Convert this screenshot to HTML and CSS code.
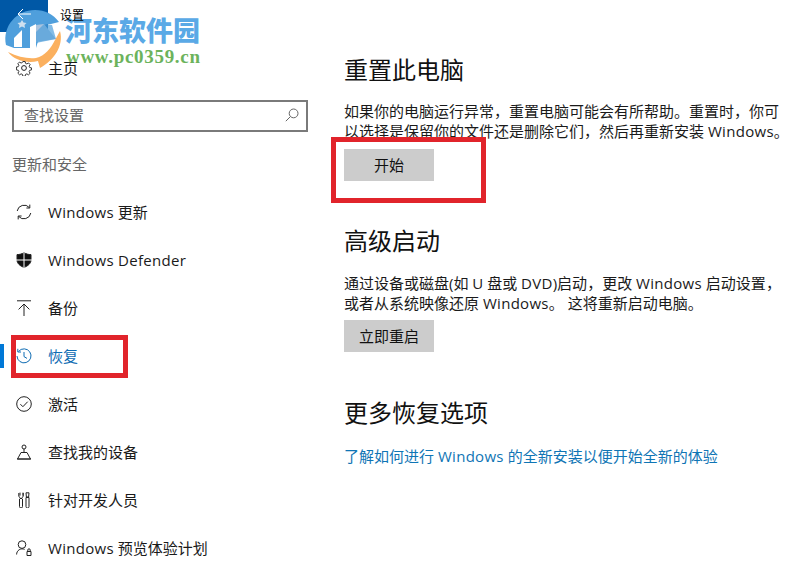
FILE: index.html
```html
<!DOCTYPE html>
<html lang="zh-CN">
<head>
    <meta charset="UTF-8">
    <meta name="viewport" content="width=device-width, initial-scale=1.0">
    <title>设置</title>
    <link rel="stylesheet" href="styles.css">
</head>
<body>
    <div class="page">
        <aside class="sidebar">
            <div class="titlebar">
                <span class="back">
                    <svg width="14" height="12" viewBox="0 0 14 12"><path d="M14 6H1M6 1L1 6l5 5"/></svg>
                </span>
                <span class="app-title">设置</span>
            </div>
            <a class="nav-item home">
                <svg class="icon" viewBox="0 0 16 16"><circle cx="8" cy="8" r="2.4"/><path d="M6.7 .8h2.6l.4 2 1.500 .7 1.800-1.100 1.800 1.800-1.100 1.800 .7 1.500 2 .4v2.200l-2 .4-.7 1.500 1.100 1.800-1.800 1.800-1.800-1.100-1.500 .7-.4 2H6.700l-.4-2-1.500-.7-1.800 1.100-1.800-1.800 1.100-1.800-.7-1.500-2-.4V6.900l2-.4 .7-1.500-1.100-1.800 1.800-1.800 1.800 1.100 1.500-.7z" transform="translate(.8 .8) scale(.9)"/></svg>
                <span>主页</span>
            </a>
            <div class="search">
                <span>查找设置</span>
                <svg width="14" height="14" viewBox="0 0 14 14"><circle cx="8.6" cy="5.4" r="4.4"/><path d="M5.4 8.6L.8 13.2"/></svg>
            </div>
            <div class="section-label">更新和安全</div>
            <nav>
                <a class="nav-item">
                    <svg class="icon" viewBox="0 0 16 16"><path d="M1.2 7A7 7 0 0 1 13.4 3.6M14.8 9A7 7 0 0 1 2.6 12.4M13.8 .6v3.4h-3.4M2.2 15.4V12h3.4"/></svg>
                    <span><span class="latin">Windows</span> 更新</span>
                </a>
                <a class="nav-item">
                    <svg class="icon" viewBox="0 0 16 16"><path class="solid" d="M8 .6C6 2 3.500 2.600 1 2.600V8c0 3.400 3 6 7 7.400 4-1.400 7-4 7-7.400V2.600C12.500 2.600 10 2 8 .6z"/><path class="cut" d="M8 0v16M0 8h16"/></svg>
                    <span class="latin">Windows Defender</span>
                </a>
                <a class="nav-item">
                    <svg class="icon" viewBox="0 0 16 16"><path d="M1 .8h14M8 16V4M2.600 9.400L8 4l5.400 5.400"/></svg>
                    <span>备份</span>
                </a>
                <a class="nav-item active">
                    <svg class="icon" viewBox="0 0 16 16"><path d="M2.600 3.400A7 7 0 1 1 1 8M1.800 .8v3.200H5M8 4v4.600l3 1.800"/></svg>
                    <span>恢复</span>
                </a>
                <a class="nav-item">
                    <svg class="icon" viewBox="0 0 16 16"><circle cx="8" cy="8" r="7.300"/><path d="M4.400 8.200l2.500 2.500 4.800-5"/></svg>
                    <span>激活</span>
                </a>
                <a class="nav-item">
                    <svg class="icon" viewBox="0 0 16 16"><circle cx="8" cy="3" r="2"/><path d="M8 5v4M5 8.500h6l3.500 6.500h-13zM1 15h14"/></svg>
                    <span>查找我的设备</span>
                </a>
                <a class="nav-item">
                    <svg class="icon" viewBox="0 0 16 16"><path d="M4 .6v3M7 .6v3M2.800 1v3.500l1.200 1v1h2v-1l1.200-1V1M3.500 7v7.500a1.500 1.500 0 0 0 3 0V7M10 .8h3l-.4 4.200h-2.200zM10 5.500h3v9a1.500 1.500 0 0 1-3 0z"/></svg>
                    <span>针对开发人员</span>
                </a>
                <a class="nav-item">
                    <svg class="icon" viewBox="0 0 16 16"><circle cx="6" cy="4.600" r="3.800"/><path d="M.6 14.500a5.600 5.600 0 0 1 8-5.100M11 11.500h4v4h-4zM11.800 11.500V10a1.200 1.200 0 0 1 2.400 0v1.500"/></svg>
                    <span><span class="latin">Windows</span> 预览体验计划</span>
                </a>
            </nav>
        </aside>
        <main class="content">
            <section class="block first">
                <h2>重置此电脑</h2>
                <p>如果你的电脑运行异常<span class="comma">，</span>重置电脑可能会有所帮助。重置时<span class="comma">，</span>你可<br>以选择是保留你的文件还是删除它们<span class="comma">，</span>然后再重新安装 <span class="latin">Windows</span>。</p>
                <button>开始</button>
            </section>
            <section class="block">
                <h2>高级启动</h2>
                <p>通过设备或磁盘(如 U 盘或 <span class="latin">DVD</span>)启动<span class="comma">，</span>更改 <span class="latin">Windows</span> 启动设置<span class="comma">，</span><br>或者从系统映像还原 <span class="latin">Windows</span>。 这将重新启动电脑。</p>
                <button>立即重启</button>
            </section>
            <section class="block">
                <h2>更多恢复选项</h2>
                <a class="link">了解如何进行 <span class="latin">Windows</span> 的全新安装以便开始全新的体验</a>
            </section>
        </main>

        <div class="mark mark-start"></div>
        <div class="mark mark-nav"></div>

        <div class="watermark">
            <svg class="wm-logo" width="70" height="72" viewBox="0 0 70 72">
                <path fill="#4f9fdc" d="M6 45C2 26 17 10 35 10c10 0 18 4 24 12l-8 2-8 1-7 23H14z"/>
                <path fill="#fff" d="M14 47v-9l8-8v17zM30 27l6-3v24h-6z"/>
                <path fill="#a9c3de" d="M36 25l8-1 12 15-20 3z"/>
                <path fill="#4f9fdc" d="M36 32l8-8 8 1 4 14-20 4z" opacity=".7"/>
                <path fill="#fbb05e" d="M8 52c10 5 20 7 28 6 9-2 15-10 19-18l5-9c4 15-6 29-20 37l-2-7c-11 3-24-1-30-9z"/>
                <path fill="#cfe0ef" d="M22 20l1.500 2.500 3 .5-2 2 .5 3-3-1.400-3 1.400 .5-3-2-2 3-.5z"/>
            </svg>
            <div class="wm-name">河东软件园</div>
            <div class="wm-url">www.pc0359.cn</div>
        </div>
    </div>
</body>
</html>
```

FILE: styles.css
```css
html, body {
    margin: 0;
    padding: 0;
    height: 100%;
    overflow: hidden;
}
body {
    font-family: "Open Sans", "Noto Sans CJK SC", sans-serif;
    font-size: 15px;
    line-height: 20px;
    color: #1a1a1a;
    background-color: #fff;
}
.page {
    position: relative;
    display: flex;
    width: 796px;
    height: 568px;
    overflow: hidden;
}
.latin {
    letter-spacing: .3px;
}
.comma {
    font-family: "Noto Sans CJK TC", sans-serif;
}
.sidebar {
    flex: 0 0 320px;
}
.titlebar {
    display: flex;
    align-items: center;
    height: 32px;
    margin-bottom: 12px;
}
.back {
    display: flex;
    align-items: center;
    justify-content: center;
    width: 48px;
    height: 32px;
    background-color: #0058a6;
}
.back svg {
    position: relative;
    top: -2px;
    z-index: 2;
    fill: none;
    stroke: #fff;
    stroke-width: 1;
}
.app-title {
    position: relative;
    z-index: 2;
    margin-left: 12px;
    font-size: 12px;
    color: #000;
}
.nav-item {
    display: flex;
    align-items: center;
    height: 48px;
    padding-left: 16px;
    position: relative;
}
.nav-item.home {
    z-index: 2;
}
.nav-item .icon {
    flex: 0 0 16px;
    width: 16px;
    height: 16px;
    margin-right: 16px;
    fill: none;
    stroke: #222;
    stroke-width: 1;
}
.nav-item .solid {
    fill: #111;
}
.nav-item .cut {
    stroke: #fff;
}
.nav-item.active {
    color: #0f6cb3;
}
.nav-item.active .icon {
    stroke: #0f6cb3;
}
.nav-item.active::before {
    content: "";
    position: absolute;
    left: 0;
    top: 12px;
    width: 4px;
    height: 24px;
    background-color: #0078d7;
}
.search {
    display: flex;
    align-items: center;
    justify-content: space-between;
    box-sizing: border-box;
    height: 32px;
    margin: 8px 12px 0;
    padding: 0 7px 2px 10px;
    border: 2px solid #7a7a7a;
    color: #666;
}
.search svg {
    fill: none;
    stroke: #666;
    stroke-width: 1;
}
.section-label {
    height: 48px;
    margin-top: 8px;
    padding-left: 12px;
    line-height: 48px;
    color: #666;
}
.content {
    flex: 1;
    padding: 54px 0 0 24px;
}
.block {
    margin-top: 44px;
}
.block + .block + .block {
    margin-top: 45px;
}
.block.first {
    margin-top: 0;
}
h2 {
    margin: 0 0 16px;
    font-size: 24px;
    font-weight: 400;
    line-height: 32px;
    color: #111;
}
.block.first h2 {
    margin-bottom: 15px;
}
.block.first p {
    margin-bottom: 8px;
}
.block + .block + .block h2 {
    margin-bottom: 17px;
}
p {
    margin: 0 0 7px;
    white-space: nowrap;
}
button {
    display: block;
    width: 90px;
    height: 32px;
    padding: 0;
    border: none;
    background-color: #ccc;
    font: inherit;
    color: #111;
}
.link {
    color: #0f75b5;
}
.mark {
    position: absolute;
    box-sizing: border-box;
    border: 5px solid #e1242b;
}
.mark-start {
    left: 331px;
    top: 137px;
    width: 155px;
    height: 66px;
}
.mark-nav {
    left: 11px;
    top: 335px;
    width: 117px;
    height: 43px;
}
.watermark {
    position: absolute;
    left: 0;
    top: 0;
    z-index: 1;
    width: 210px;
    height: 72px;
}
.wm-logo {
    position: absolute;
    left: 0;
    top: 0;
}
.wm-name {
    position: absolute;
    left: 65px;
    top: 12px;
    font-family: "Noto Sans CJK SC", sans-serif;
    font-size: 27px;
    font-weight: 900;
    line-height: 36px;
    color: #5aa9e6;
}
.wm-url {
    position: absolute;
    left: 66px;
    top: 46px;
    font-family: "Liberation Serif", serif;
    font-size: 19px;
    font-weight: 700;
    line-height: 22px;
    letter-spacing: .7px;
    white-space: nowrap;
    color: #6cb35c;
}
```
